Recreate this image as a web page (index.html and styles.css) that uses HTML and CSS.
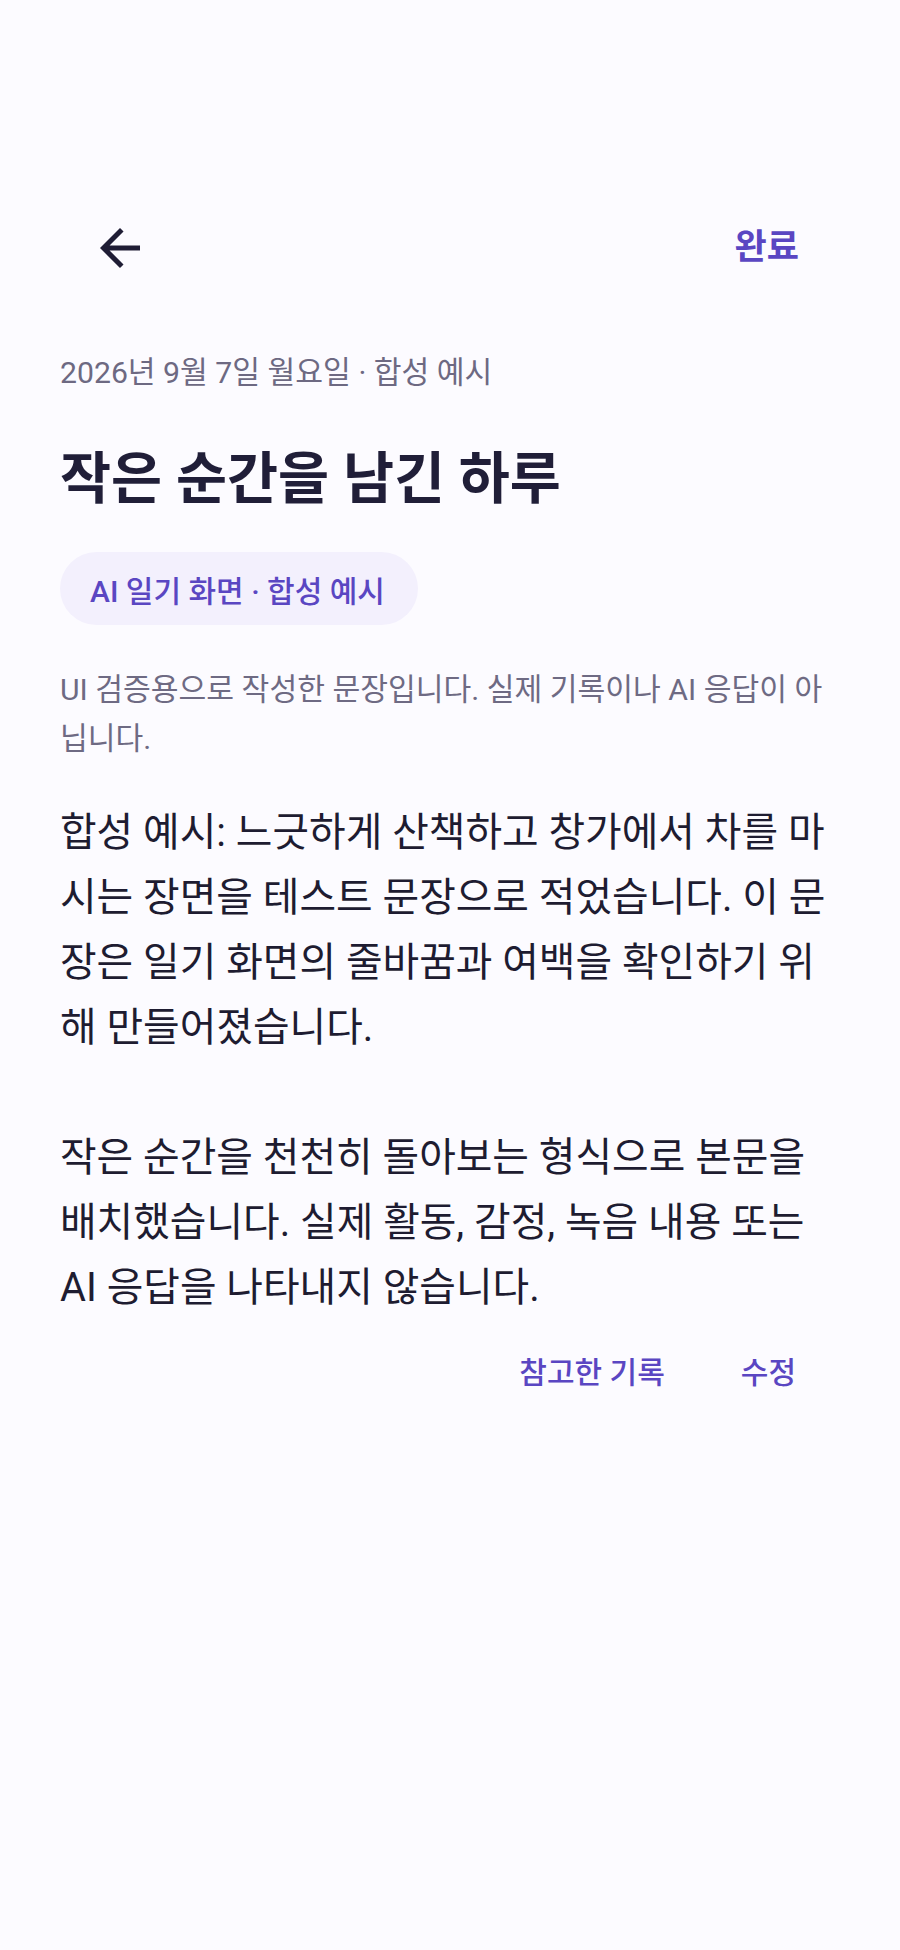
FILE: index.html
```html
<!DOCTYPE html>
<html lang="ko">
<head>
<meta charset="utf-8">
<title>작은 순간을 남긴 하루</title>
<link rel="stylesheet" href="styles.css">
</head>
<body>
<div class="screen">
  <header class="topbar">
    <button class="icon-btn" aria-label="뒤로">
      <svg viewBox="0 0 24 24" width="60" height="60" aria-hidden="true"><path d="M20 11H7.83l5.59-5.59L12 4l-8 8 8 8 1.41-1.41L7.83 13H20v-2z"/></svg>
    </button>
    <button class="text-btn done">완료</button>
  </header>
  <main class="content">
    <p class="date">2026년 9월 7일 월요일 · 합성 예시</p>
    <h1 class="title">작은 순간을 남긴 하루</h1>
    <div class="chip-row"><span class="chip">AI 일기 화면 · 합성 예시</span></div>
    <p class="note">UI 검증용으로 작성한 문장입니다. 실제 기록이나 AI 응답이 아닙니다.</p>
    <div class="body-text">
      <p>합성 예시: 느긋하게 산책하고 창가에서 차를 마시는 장면을 테스트 문장으로 적었습니다. 이 문장은 일기 화면의 줄바꿈과 여백을 확인하기 위해 만들어졌습니다.</p>
      <p>작은 순간을 천천히 돌아보는 형식으로 본문을 배치했습니다. 실제 활동, 감정, 녹음 내용 또는 AI 응답을 나타내지 않습니다.</p>
    </div>
    <div class="actions">
      <button class="text-btn action">참고한 기록</button>
      <button class="text-btn action">수정</button>
    </div>
  </main>
</div>
</body>
</html>
```

FILE: styles.css
```css
* { box-sizing: border-box; }

html, body {
  margin: 0;
  padding: 0;
  background: #fcfbff;
}

body {
  font-family: Roboto, "Noto Sans CJK KR", sans-serif;
  color: #1f1d35;
}

.screen {
  width: 900px;
  height: 1950px;
  padding-top: 188px;
  overflow: hidden;
  background: #fcfbff;
}

button {
  font-family: inherit;
  background: none;
  border: 0;
  padding: 0;
  margin: 0;
  cursor: pointer;
}

.topbar {
  height: 120px;
  display: flex;
  align-items: center;
  justify-content: space-between;
  padding: 0 61px 0 90px;
}

.icon-btn {
  width: 60px;
  height: 60px;
  display: flex;
  align-items: center;
  justify-content: center;
}

.icon-btn svg {
  display: block;
  fill: #1f1d35;
}

.text-btn {
  color: #5a46c2;
  font-weight: 500;
}

.done {
  font-size: 35px;
  line-height: 36px;
  font-weight: 700;
  padding: 0 40px;
}

.content {
  padding: 0 60px;
}

.date {
  margin: 45px 0 0;
  font-size: 30.2px;
  line-height: 40px;
  color: #6d6982;
}

.title {
  margin: 55px 0 0;
  font-size: 55.5px;
  line-height: 64px;
  font-weight: 700;
  color: #201e38;
}

.chip-row {
  margin-top: 40px;
  display: flex;
}

.chip {
  display: inline-flex;
  align-items: center;
  height: 73px;
  padding: 0 33px 0 30px;
  border-radius: 37px;
  background: #f3f0fd;
  color: #5a46c2;
  font-size: 30px;
  font-weight: 500;
}

.note {
  margin: 40px 0 0;
  font-size: 30.2px;
  line-height: 49px;
  color: #6e6a83;
}

.body-text {
  margin-top: 37px;
  font-size: 39.8px;
  line-height: 65px;
  color: #1e1c31;
}

.body-text p {
  margin: 0;
}

.body-text p + p {
  margin-top: 65px;
}

.actions {
  margin-top: 33px;
  display: flex;
  justify-content: flex-end;
  gap: 16px;
  padding-right: 14px;
}

.action {
  font-size: 30px;
  line-height: 40px;
  padding: 0 30px;
}
```
